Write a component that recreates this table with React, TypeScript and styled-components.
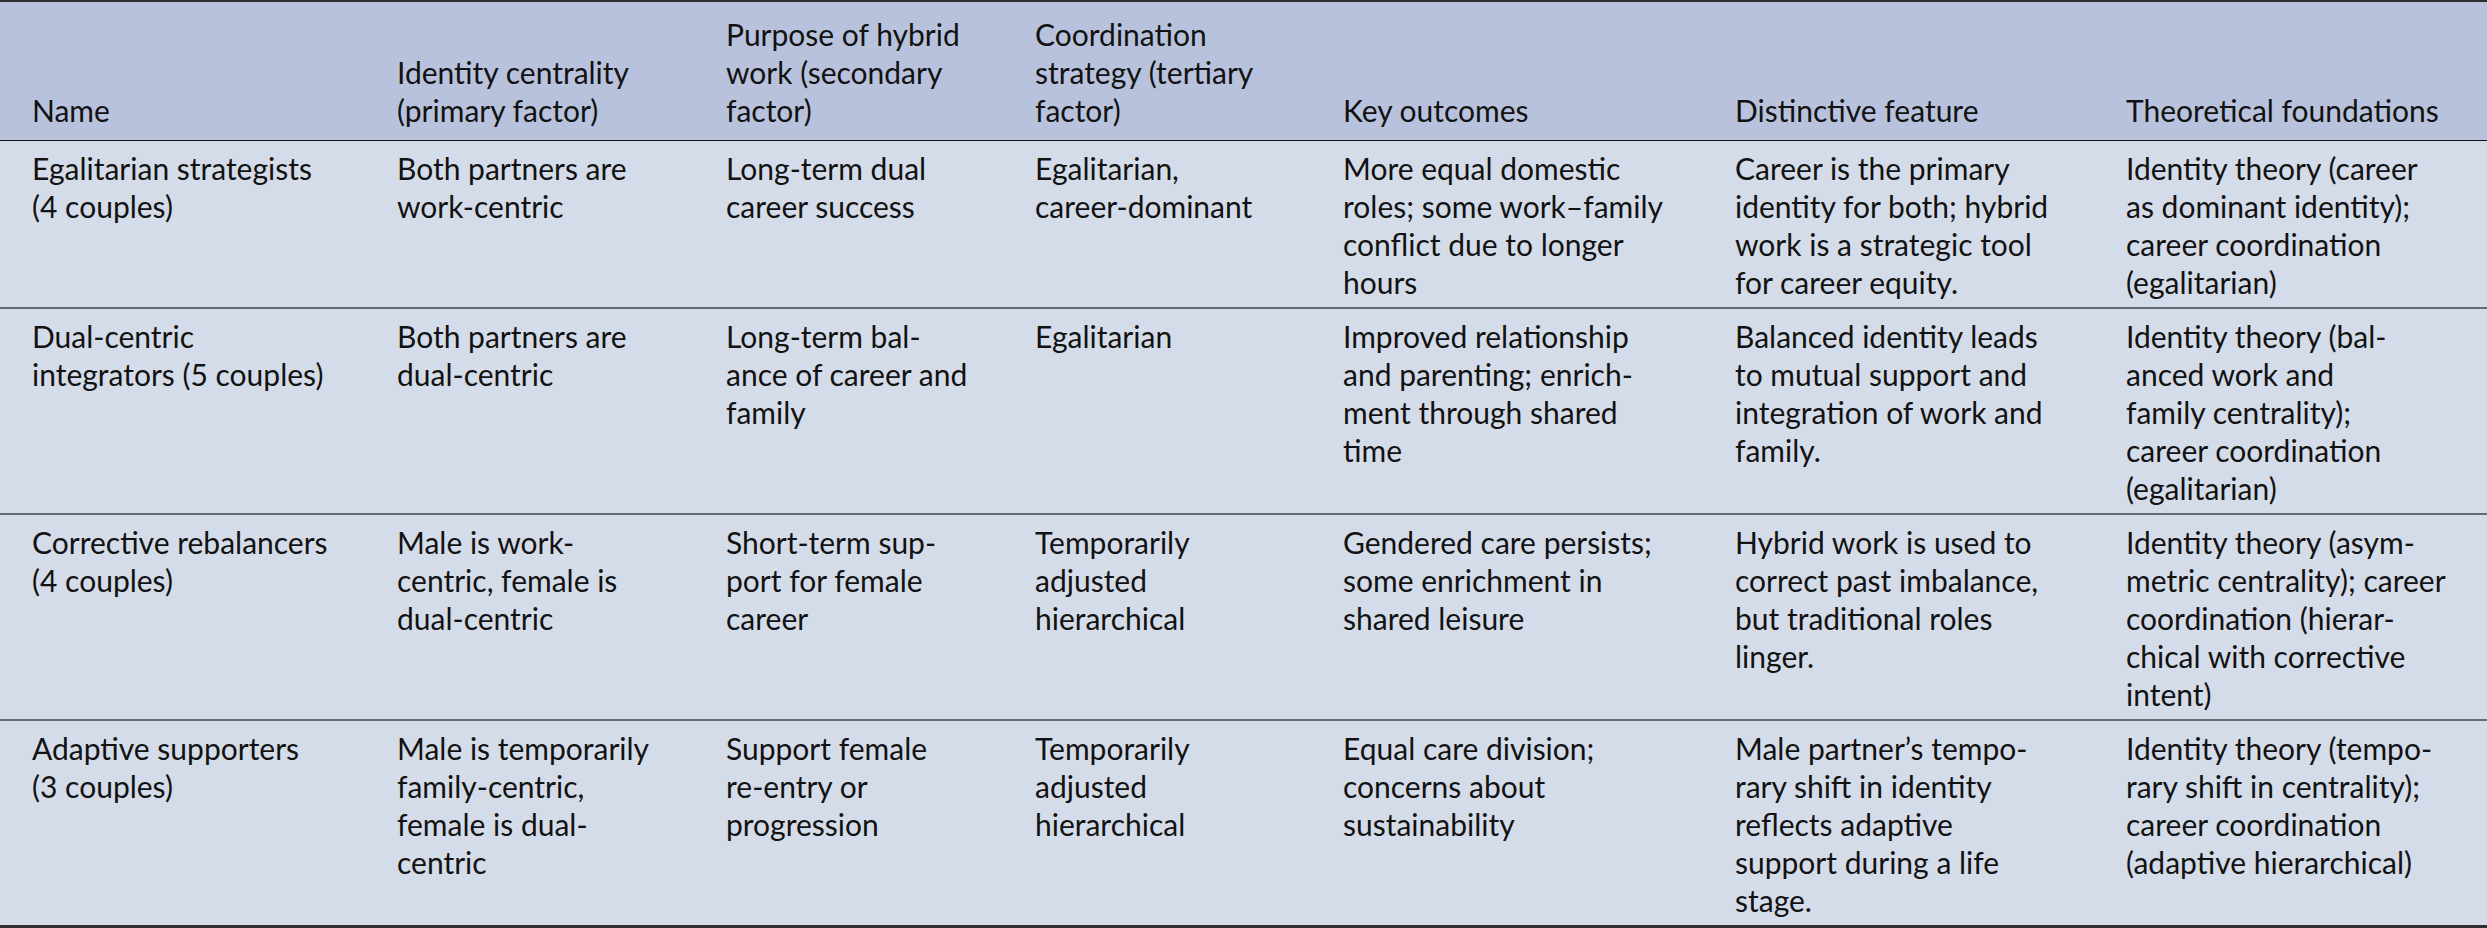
import React from "react";
import styled, { createGlobalStyle } from "styled-components";

const GlobalStyle = createGlobalStyle`
  html, body {
    margin: 0;
    padding: 0;
    background: #d5dce9;
  }
`;

type Cell = string[];

const headers: Cell[] = [
  ["Name"],
  ["Identity centrality", "(primary factor)"],
  ["Purpose of hybrid", "work (secondary", "factor)"],
  ["Coordination", "strategy (tertiary", "factor)"],
  ["Key outcomes"],
  ["Distinctive feature"],
  ["Theoretical foundations"],
];

const rows: Cell[][] = [
  [
    ["Egalitarian strategists", "(4 couples)"],
    ["Both partners are", "work-centric"],
    ["Long-term dual", "career success"],
    ["Egalitarian,", "career-dominant"],
    ["More equal domestic", "roles; some work–family", "conflict due to longer", "hours"],
    ["Career is the primary", "identity for both; hybrid", "work is a strategic tool", "for career equity."],
    ["Identity theory (career", "as dominant identity);", "career coordination", "(egalitarian)"],
  ],
  [
    ["Dual-centric", "integrators (5 couples)"],
    ["Both partners are", "dual-centric"],
    ["Long-term bal-", "ance of career and", "family"],
    ["Egalitarian"],
    ["Improved relationship", "and parenting; enrich-", "ment through shared", "time"],
    ["Balanced identity leads", "to mutual support and", "integration of work and", "family."],
    ["Identity theory (bal-", "anced work and", "family centrality);", "career coordination", "(egalitarian)"],
  ],
  [
    ["Corrective rebalancers", "(4 couples)"],
    ["Male is work-", "centric, female is", "dual-centric"],
    ["Short-term sup-", "port for female", "career"],
    ["Temporarily", "adjusted", "hierarchical"],
    ["Gendered care persists;", "some enrichment in", "shared leisure"],
    ["Hybrid work is used to", "correct past imbalance,", "but traditional roles", "linger."],
    ["Identity theory (asym-", "metric centrality); career", "coordination (hierar-", "chical with corrective", "intent)"],
  ],
  [
    ["Adaptive supporters", "(3 couples)"],
    ["Male is temporarily", "family-centric,", "female is dual-", "centric"],
    ["Support female", "re-entry or", "progression"],
    ["Temporarily", "adjusted", "hierarchical"],
    ["Equal care division;", "concerns about", "sustainability"],
    ["Male partner’s tempo-", "rary shift in identity", "reflects adaptive", "support during a life", "stage."],
    ["Identity theory (tempo-", "rary shift in centrality);", "career coordination", "(adaptive hierarchical)"],
  ],
];

const colWidths = [365, 329, 309, 308, 392, 391, 393];

export default function App() {
  return (
    <>
      <GlobalStyle />
      <Table>
        <colgroup>
          {colWidths.map((w, i) => (
            <col key={i} style={{ width: w }} />
          ))}
        </colgroup>
        <thead>
          <tr>
            {headers.map((h, i) => (
              <HeadCell key={i}>
                {h.map((line, j) => (
                  <Line key={j}>{line}</Line>
                ))}
              </HeadCell>
            ))}
          </tr>
        </thead>
        <tbody>
          {rows.map((row, r) => {
            const last = r === rows.length - 1;
            return (
              <BodyRow key={r} $last={last}>
                {row.map((cell, c) => (
                  <BodyCell key={c}>
                    {cell.map((line, j) => (
                      <Line key={j}>{line}</Line>
                    ))}
                  </BodyCell>
                ))}
              </BodyRow>
            );
          })}
        </tbody>
      </Table>
    </>
  );
}

const Table = styled.table`
  width: 2487px;
  table-layout: fixed;
  border-collapse: collapse;
  font-family: Lato, "Open Sans", sans-serif;
  font-size: 30px;
  line-height: 38px;
  color: #121212;
  background: #d5dce9;

  thead tr {
    background: #b9c2dc;
    border-top: 2px solid #2e2e2e;
    border-bottom: 1px solid #111;
  }
`;

const HeadCell = styled.th`
  text-align: left;
  font-weight: 400;
  vertical-align: bottom;
  padding: 13px 8px 11px 32px;
`;

const BodyRow = styled.tr<{ $last: boolean }>`
  border-bottom: ${(p) => (p.$last ? "3px solid #2e2e2e" : "2px solid #646a74")};
`;

const BodyCell = styled.td`
  vertical-align: top;
  padding: 8px 8px 6px 32px;
`;

const Line = styled.span`
  display: block;
  white-space: nowrap;
`;
